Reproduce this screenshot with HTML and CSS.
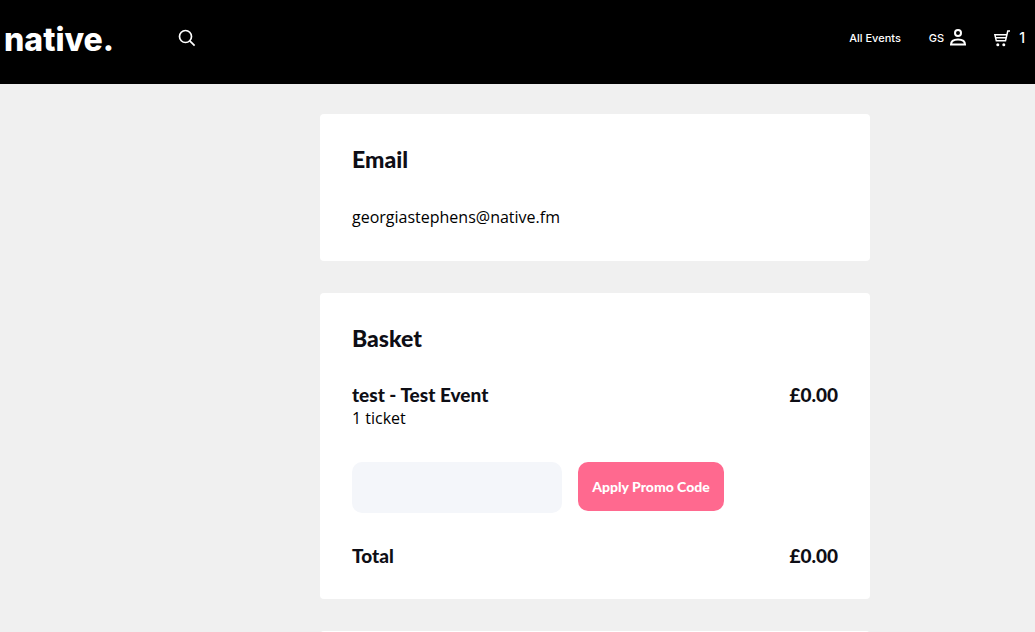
FILE: index.html
```html
<!DOCTYPE html>
<html lang="en">
<head>
    <meta charset="UTF-8">
    <meta name="viewport" content="width=device-width, initial-scale=1.0">
    <title>Checkout - native.</title>
    <link rel="stylesheet" href="styles.css">
</head>
<body>
    <header class="header">
        <a class="logo" href="/">native.</a>
        <button class="search-btn" type="button" aria-label="Search">
            <svg width="18" height="18" viewBox="0 0 18 18" fill="none" stroke="#fff" stroke-width="1.7">
                <circle cx="7.5" cy="7.5" r="6"/>
                <path d="M11.8 11.8 16.6 16.6"/>
            </svg>
        </button>
        <nav class="nav">
            <a class="nav-link" href="/events">All Events</a>
            <a class="nav-link user-link" href="/account">
                GS
                <svg width="16" height="18" viewBox="0 0 16 18" fill="none" stroke="#fff" stroke-width="2">
                    <circle cx="8" cy="4" r="3"/>
                    <path d="M1 15.500c0-3.400 3.200-5 7-5s7 1.600 7 5z"/>
                </svg>
            </a>
            <a class="nav-link cart-link" href="/basket" aria-label="Basket, 1 item">
                <svg width="17" height="17" viewBox="0 0 17 17" fill="none" stroke="#fff" stroke-width="1.5">
                    <path d="M16 1h-2.200l-2.300 9.800H2.300L.9 4.800h12M1.600 7.800h10.600"/>
                    <circle cx="3.800" cy="14.800" r="1.500" fill="#fff" stroke="none"/>
                    <circle cx="9.800" cy="14.800" r="1.500" fill="#fff" stroke="none"/>
                </svg>
                <span class="cart-count">1</span>
            </a>
        </nav>
    </header>

    <main class="checkout">
        <section class="card">
            <h2>Email</h2>
            <p>georgiastephens@native.fm</p>
        </section>

        <section class="card">
            <h2>Basket</h2>
            <div class="row">
                <h3>test - Test Event</h3>
                <span class="price">£0.00</span>
            </div>
            <p>1 ticket</p>
            <form class="promo">
                <input class="promo-input" type="text" name="promo" aria-label="Promo code">
                <button class="promo-btn" type="button">Apply Promo Code</button>
            </form>
            <div class="row">
                <h3>Total</h3>
                <span class="price">£0.00</span>
            </div>
        </section>

        <section class="card"></section>
    </main>
</body>
</html>
```

FILE: styles.css
```css
* {
    box-sizing: border-box;
}
body {
    margin: 0;
    background: #f0f0f0;
    color: #0e0e15;
    font-family: "Open Sans", sans-serif;
    font-size: 16px;
    line-height: 24px;
}
h2, h3, p {
    margin: 0;
}
p {
    color: #000;
}
.header {
    display: flex;
    align-items: flex-start;
    height: 84px;
    padding: 18px 10px 0 4px;
    background: #000;
}
.logo {
    width: 174px;
    color: #fff;
    font-family: Inter, sans-serif;
    font-size: 32px;
    font-weight: 800;
    line-height: 44px;
    text-decoration: none;
}
.search-btn {
    display: flex;
    align-items: center;
    height: 40px;
    padding: 0;
    border: none;
    background: none;
    cursor: pointer;
}
.nav {
    display: flex;
    align-items: center;
    gap: 28px;
    height: 40px;
    margin-left: auto;
}
.nav-link {
    display: flex;
    align-items: center;
    color: #fff;
    font-family: Inter, sans-serif;
    font-size: 11px;
    font-weight: 500;
    text-decoration: none;
}
.user-link {
    gap: 6px;
}
.cart-link {
    gap: 8px;
}
.cart-count {
    font-size: 14px;
}
.checkout {
    display: flex;
    flex-direction: column;
    gap: 32px;
    max-width: 550px;
    margin: 30px 0 32px 320px;
}
.card {
    padding: 32px;
    border-radius: 4px;
    background: #fff;
}
h2 {
    margin-bottom: 32px;
    font-family: Lato, sans-serif;
    font-size: 23px;
    font-weight: 900;
    line-height: 27px;
}
h3, .price {
    font-family: Lato, sans-serif;
    font-size: 19px;
    font-weight: 900;
    line-height: 22px;
}
.row {
    display: flex;
    justify-content: space-between;
}
.promo {
    display: flex;
    align-items: flex-start;
    gap: 16px;
    margin: 32px 0;
}
.promo-input {
    width: 210px;
    height: 51px;
    padding: 0 16px;
    border: none;
    border-radius: 10px;
    background: #f4f6fa;
    font: inherit;
}
.promo-btn {
    min-width: 146px;
    height: 49px;
    padding: 0 12px;
    border: none;
    border-radius: 10px;
    background: #ff698f;
    color: #fff;
    font-family: Lato, sans-serif;
    font-size: 14px;
    font-weight: 900;
    cursor: pointer;
}
```
